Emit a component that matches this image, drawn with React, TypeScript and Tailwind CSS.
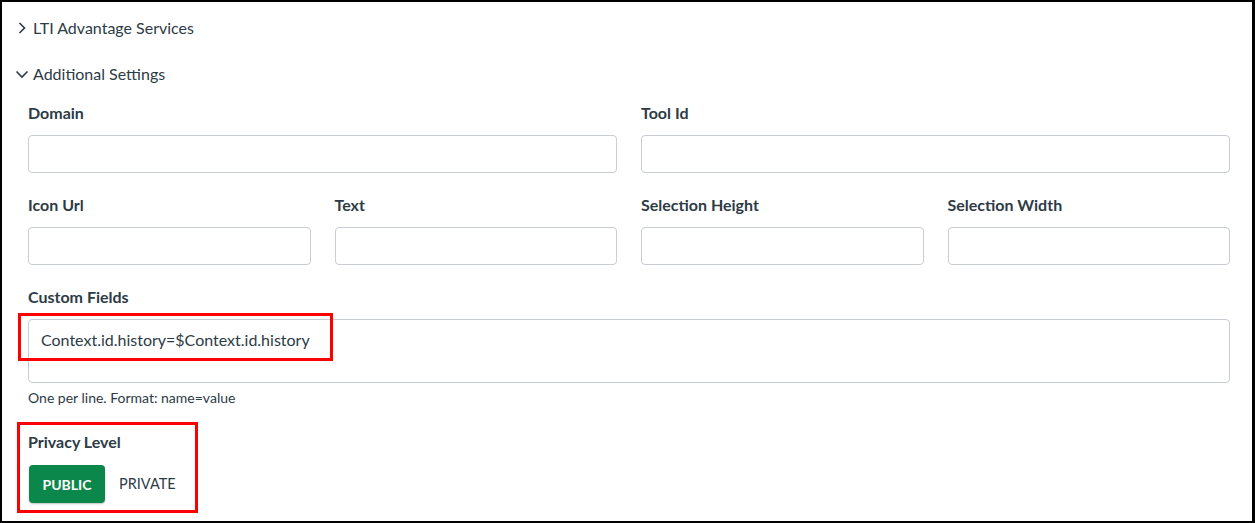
import React from "react";

const Label = ({ children, className = "" }: { children: React.ReactNode; className?: string }) => (
  <div className={`text-[16px] leading-[20px] font-bold text-[#2d3b45] ${className}`}>{children}</div>
);

const Input = ({ className = "" }: { className?: string }) => (
  <div className={`h-[38px] rounded-[4px] border border-[#c7cdd1] bg-white ${className}`} />
);

const Field = ({ label }: { label: string }) => (
  <div className="flex flex-col">
    <Label>{label}</Label>
    <Input className="mt-[12px]" />
  </div>
);

export default function App() {
  return (
    <div
      className="relative w-[1255px] h-[523px] bg-white border-t-2 border-l-2 border-b-2 border-r-[3px] border-black overflow-hidden text-[#2d3b45]"
      style={{ fontFamily: "Lato, 'Noto Sans', sans-serif" }}
    >
      <div className="pl-[13px] pt-[15px]">
        <div className="flex items-center h-[22px] text-[16px]">
          <svg width="14" height="14" viewBox="0 0 14 14" className="mr-[4px]" fill="none" stroke="#2d3b45" strokeWidth="1.6">
            <path d="M4.5 2 L9.5 7 L4.5 12" />
          </svg>
          <span>LTI Advantage Services</span>
        </div>
        <div className="flex items-center h-[22px] text-[16px] mt-[24px]">
          <svg width="14" height="14" viewBox="0 0 14 14" className="mr-[4px]" fill="none" stroke="#2d3b45" strokeWidth="1.6">
            <path d="M1.5 4.5 L7 10 L12.5 4.5" />
          </svg>
          <span>Additional Settings</span>
        </div>
      </div>

      <div className="pl-[26px] pr-[22px] mt-[18px] w-[1228px] box-content">
        <div className="grid grid-cols-2 gap-x-[24px] w-[1202px]">
          <Field label="Domain" />
          <Field label="Tool Id" />
        </div>
        <div className="grid grid-cols-4 gap-x-[24px] w-[1202px] mt-[22px]">
          <Field label="Icon Url" />
          <Field label="Text" />
          <Field label="Selection Height" />
          <Field label="Selection Width" />
        </div>
        <div className="mt-[22px] w-[1202px]">
          <Label>Custom Fields</Label>
          <div className="mt-[12px] h-[64px] rounded-[4px] border border-[#c7cdd1] bg-white pl-[12px] pt-[10px] text-[16px] leading-[20px]">
            Context.id.history=$Context.id.history
          </div>
          <div className="mt-[7px] text-[14px] leading-[16px]">One per line. Format: name=value</div>
        </div>
        <div className="mt-[26px]">
          <Label>Privacy Level</Label>
          <div className="mt-[13px] flex items-center">
            <div className="ml-[1px] w-[76px] h-[38px] rounded-[4px] bg-[#0b874b] text-white text-[14px] font-bold flex items-center justify-center shadow-[0_1px_2px_rgba(0,0,0,0.25)]">
              PUBLIC
            </div>
            <div className="ml-[14px] text-[14.5px] text-[#2d3b45]">PRIVATE</div>
          </div>
        </div>
      </div>

      <div className="absolute left-[16px] top-[311px] w-[315px] h-[48px] border-[3px] border-[#ff0000]" />
      <div className="absolute left-[15px] top-[420px] w-[181px] h-[91px] border-[3px] border-[#ff0000]" />
    </div>
  );
}
